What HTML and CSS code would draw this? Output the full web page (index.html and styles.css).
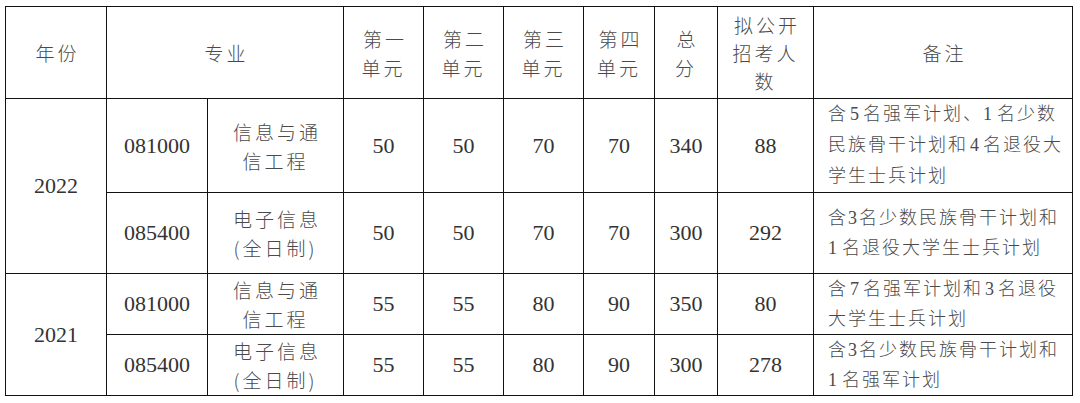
FILE: index.html
```html
<!DOCTYPE html>
<html lang="zh">
<head>
<meta charset="utf-8">
<link rel="stylesheet" href="styles.css">
</head>
<body>
<table class="grid">
  <colgroup>
    <col class="c-year"><col class="c-code"><col class="c-name">
    <col class="c-u"><col class="c-u"><col class="c-u">
    <col class="c-u4"><col class="c-total"><col class="c-plan"><col class="c-note">
  </colgroup>
  <tr class="r-head">
    <td class="cj">年份</td>
    <td class="cj" colspan="2">专业</td>
    <td class="cj">第一<br>单元</td>
    <td class="cj">第二<br>单元</td>
    <td class="cj">第三<br>单元</td>
    <td class="cj">第四<br>单元</td>
    <td class="cj">总<br>分</td>
    <td class="cj tight">拟公开<br>招考人<br>数</td>
    <td class="cj">备注</td>
  </tr>
  <tr class="r-1">
    <td class="num" rowspan="2">2022</td>
    <td class="num">081000</td>
    <td class="cj">信息与通<br>信工程</td>
    <td class="num">50</td><td class="num">50</td><td class="num">70</td><td class="num">70</td>
    <td class="num">340</td><td class="num">88</td>
    <td class="note loose">含<span class="d">5</span>名强军计划、<span class="dr">1</span>名少数<br>民族骨干计划和<span class="d">4</span>名退役大<br>学生士兵计划</td>
  </tr>
  <tr class="r-2">
    <td class="num">085400</td>
    <td class="cj">电子信息<br>(全日制)</td>
    <td class="num">50</td><td class="num">50</td><td class="num">70</td><td class="num">70</td>
    <td class="num">300</td><td class="num">292</td>
    <td class="note">含3名少数民族骨干计划和<br><span class="dr">1</span>名退役大学生士兵计划</td>
  </tr>
  <tr class="r-3">
    <td class="num" rowspan="2">2021</td>
    <td class="num">081000</td>
    <td class="cj">信息与通<br>信工程</td>
    <td class="num">55</td><td class="num">55</td><td class="num">80</td><td class="num">90</td>
    <td class="num">350</td><td class="num">80</td>
    <td class="note">含<span class="d">7</span>名强军计划和<span class="d">3</span>名退役<br>大学生士兵计划</td>
  </tr>
  <tr class="r-4">
    <td class="num">085400</td>
    <td class="cj">电子信息<br>(全日制)</td>
    <td class="num">55</td><td class="num">55</td><td class="num">80</td><td class="num">90</td>
    <td class="num">300</td><td class="num">278</td>
    <td class="note">含3名少数民族骨干计划和<br><span class="dr">1</span>名强军计划</td>
  </tr>
</table>
</body>
</html>
```

FILE: styles.css
```css
html, body {
  margin: 0;
  padding: 0;
  background: #ffffff;
}

body {
  padding: 6px 0 0 5px;
  font-family: "Liberation Serif", "Noto Sans CJK SC", serif;
  color: #444;
}

.grid {
  border-collapse: collapse;
  table-layout: fixed;
  width: 1068px;
}

.grid td {
  border: 1px solid #111;
  padding: 0;
  text-align: center;
  vertical-align: middle;
  white-space: nowrap;
  overflow: hidden;
}

.c-year { width: 101px; }
.c-code { width: 101px; }
.c-name { width: 136px; }
.c-u { width: 80px; }
.c-u4 { width: 71px; }
.c-total { width: 63px; }
.c-plan { width: 96px; }
.c-note { width: 259px; }

.r-head { height: 92px; }
.r-1 { height: 94px; }
.r-2 { height: 81px; }
.r-3 { height: 61px; }
.r-4 { height: 61px; }

.cj {
  font-family: "Noto Sans CJK SC", sans-serif;
  font-weight: 300;
  font-size: 19px;
  letter-spacing: 3px;
  text-indent: 3px;
  line-height: 29px;
  color: #4a4a4a;
}

.tight { line-height: 28px; }

.num {
  font-size: 22px;
  color: #333;
}

.grid td.note {
  text-align: left;
  padding-left: 14px;
  font-family: "Liberation Serif", "Noto Sans CJK SC", serif;
  font-weight: 300;
  font-size: 18px;
  letter-spacing: 2px;
  line-height: 30px;
  color: #4a4a4a;
}

.grid td.loose { line-height: 31px; }

.d { margin: 0 2px; }
.dr { margin-right: 3px; }
```
